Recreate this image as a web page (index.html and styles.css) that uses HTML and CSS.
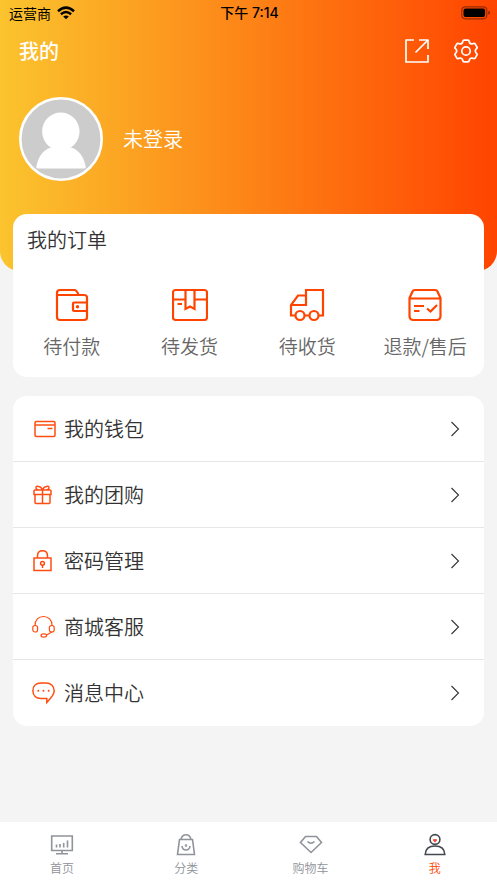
FILE: index.html
```html
<!DOCTYPE html>
<html lang="zh-CN">
<head>
<meta charset="utf-8">
<meta name="viewport" content="width=device-width, initial-scale=1">
<title>我的</title>
<link rel="stylesheet" href="styles.css">
</head>
<body>
<header class="hero">
  <div class="status">
    <div class="carrier">运营商
      <svg width="18" height="14" viewBox="0 0 18 14" fill="none" stroke="#000" stroke-width="2.5"><path d="M1 5.2Q9-2 17 5.2M3.9 8.3Q9 3.8 14.1 8.3"/><path d="M9 13.2 6.2 10.4Q9 8.4 11.8 10.4Z" fill="#000" stroke="none"/></svg>
    </div>
    <div class="time">下午 7:14</div>
    <div class="battery">
      <svg width="29" height="14" viewBox="0 0 29 14"><rect x=".8" y=".8" width="25" height="12" rx="3.5" fill="none" stroke="#000" stroke-opacity=".4" stroke-width="1.2"/><rect x="2.5" y="2.5" width="21.600" height="8.600" rx="2"/><path d="M27.300 4.800Q29 5.500 29 6.800T27.300 8.800Z" fill-opacity=".5"/></svg>
    </div>
  </div>
  <div class="topbar">
    <h1>我的</h1>
    <button class="icon-button" type="button" aria-label="分享">
      <svg width="24" height="24" viewBox="0 0 24 24"><path d="M9 1H1v22h22v-7M14 1h9v9M23 1 10.500 13.500"/></svg>
    </button>
    <button class="icon-button" type="button" aria-label="设置">
      <svg width="24" height="24" viewBox="0 0 24 24"><circle cx="12" cy="12" r="4.200"/><path d="M10 1.200H14Q15 1.200 15.200 2.500 15.700 5 18 5 20.500 3.800 21.300 5.200L22.900 8Q23.500 9 22.300 9.900 20.300 12 22.300 14.100 23.500 15 22.900 16L21.300 18.800Q20.500 20.200 18 19 15.700 19 15.200 21.500 15 22.800 14 22.800H10Q9 22.800 8.800 21.500 8.300 19 6 19 3.500 20.200 2.700 18.800L1.100 16Q.5 15 1.700 14.100 3.700 12 1.700 9.900 .5 9 1.100 8L2.700 5.200Q3.500 3.800 6 5 8.300 5 8.800 2.500 9 1.200 10 1.200Z"/></svg>
    </button>
  </div>
  <div class="profile">
    <svg class="avatar" viewBox="0 0 84 84" aria-hidden="true"><circle cx="42" cy="42" r="40.700" fill="#ccc" stroke="#fff" stroke-width="2.600"/><ellipse cx="41.800" cy="34.500" rx="18.700" ry="19" fill="#fff"/><path d="M32 50.500Q20.500 54 17.300 69.500 17 71.500 19 71.500H65Q67 71.500 66.700 69.500 63.500 54 52 50.500Z" fill="#fff"/></svg>
    <a class="login" href="#login">未登录</a>
  </div>
</header>

<main class="content">
  <section class="card orders">
    <h2>我的订单</h2>
    <nav class="order-list" aria-label="我的订单">
      <a href="#pay"><svg width="36" height="36" viewBox="0 0 36 36"><path d="M3 8H30Q33 8 33 10.500V30.500Q33 33 30 33H6Q3 33 3 30V6Q3 3 6 3H20Q23 3 24.500 8M33 15.500H20Q19 15.500 19 16.500V23Q19 24 20 24H33"/><circle class="dot" cx="23.500" cy="19.800" r="1.700"/></svg><span>待付款</span></a>
      <a href="#ship"><svg width="36" height="36" viewBox="0 0 36 36"><rect x="1" y="3" width="34" height="30" rx="2.500"/><path d="M1 12.500H13M23 12.500H35M13.500 3V22L18 19.500 22.500 22V3M5.500 17H10"/></svg><span>待发货</span></a>
      <a href="#receive"><svg width="36" height="36" viewBox="0 0 36 36"><path d="M17 19V3H34V28.500H30M6 28.500H2V18L9 8.500H17M2 18H17M16 28.500H20"/><circle cx="11" cy="28.500" r="4.500"/><circle cx="25" cy="28.500" r="4.500"/></svg><span>待收货</span></a>
      <a href="#refund"><svg width="36" height="36" viewBox="0 0 36 36"><path d="M2.500 11 5.500 4.500Q6 3 8 3H28Q30 3 30.500 4.500L33.500 11V29Q33.500 33 29.500 33H6.500Q2.500 33 2.500 29ZM2.500 11.500H33.500M7 19H17M7 24H12.500M20 21.500 23.500 24.500 30 18"/></svg><span>退款/售后</span></a>
    </nav>
  </section>

  <nav class="card menu" aria-label="服务">
    <a href="#wallet"><svg class="lead" viewBox="0 0 24 24"><rect x="3" y="4.500" width="20" height="15" rx="1.200"/><path d="M3 8H23M15.500 11.500H20.500"/></svg><span>我的钱包</span><svg class="chevron" viewBox="0 0 10 16"><path d="M1.500 1 8.500 8 1.500 15"/></svg></a>
    <a href="#group"><svg class="lead" viewBox="0 0 24 24"><path d="M3 7H18Q19 7 19 8V11.500H2V8Q2 7 3 7ZM3 11.500V19.500Q3 20.500 4 20.500H17Q18 20.500 18 19.500V11.500M10.500 7V20.500M10.500 7Q4 7.500 4 5T6.500 3.500Q9 3.500 10.500 7M10.500 7Q17 7.500 17 5T14.500 3.500Q12 3.500 10.500 7"/></svg><span>我的团购</span><svg class="chevron" viewBox="0 0 10 16"><path d="M1.500 1 8.500 8 1.500 15"/></svg></a>
    <a href="#password"><svg class="lead" viewBox="0 0 24 24"><rect x="2" y="9" width="17" height="12.500"/><path d="M5.500 9V7Q5.500 1.800 10.500 1.800T15.500 7V9M10.500 16V19"/><circle cx="10.500" cy="14.300" r="1.900"/></svg><span>密码管理</span><svg class="chevron" viewBox="0 0 10 16"><path d="M1.500 1 8.500 8 1.500 15"/></svg></a>
    <a href="#service"><svg class="lead thin" viewBox="0 0 24 24"><path d="M3 10.500C3 5 6.500 1.500 11.500 1.500S20 5 20 10.500M20 17 14.500 20"/><rect x=".8" y="10.500" width="4.800" height="6.500" rx="2.200"/><rect x="17.400" y="10.500" width="4.800" height="6.500" rx="2.200"/><ellipse cx="11.800" cy="20.500" rx="2.800" ry="1.600"/></svg><span>商城客服</span><svg class="chevron" viewBox="0 0 10 16"><path d="M1.500 1 8.500 8 1.500 15"/></svg></a>
    <a href="#messages"><svg class="lead" viewBox="0 0 24 24"><path d="M9 2H14C19 2 22.200 5.300 22.200 9.800 22.200 13 20 15.500 18.500 17.300L14.800 21.500V17.500H9C4 17.500 .900 14.500 .900 9.800S4 2 9 2Z"/><path class="dots" d="M6.300 9.800H6.310M11.500 9.800H11.510M16.700 9.800H16.710"/></svg><span>消息中心</span><svg class="chevron" viewBox="0 0 10 16"><path d="M1.500 1 8.500 8 1.500 15"/></svg></a>
  </nav>
</main>

<nav class="tabbar" aria-label="主导航">
  <a href="#home"><svg viewBox="0 0 24 24"><path d="M1.700 4H22.300V18.500H1.700ZM12 18.500V21.500M6 21.800H18M6.500 12.500V15.500M10 12V15.500M13.700 11V15.500M17.500 8.500V15.500"/></svg><span>首页</span></a>
  <a href="#category"><svg viewBox="0 0 24 24"><path d="M5.500 7.500H18.500L20.500 22.500H3.500ZM7 7.500Q8 2.800 12 2.800T17 7.500M8 14Q8.500 18 12 18T16 14"/><circle cx="12" cy="13.500" r=".500"/></svg><span>分类</span></a>
  <a href="#cart"><svg viewBox="0 0 24 24"><path d="M6.500 4.500H17.500L22.500 10.500 12 20.500 1.500 10.500ZM8.500 9.500Q12 13 15.500 9.500"/></svg><span>购物车</span></a>
  <a class="active" href="#me" aria-current="page"><svg viewBox="0 0 24 24"><circle cx="12" cy="7.500" r="4.900"/><path d="M2.200 22.500Q2.500 14 12 14T21.800 22.500Z"/><path class="heart" d="M12 10.500 10 8.500Q9.900 6.600 12 7.200 14.100 6.600 14 8.500Z"/></svg><span>我</span></a>
</nav>
</body>
</html>
```
FILE: styles.css
```css
* {
  box-sizing: border-box;
}

body {
  margin: 0;
  min-height: 100vh;
  display: flex;
  flex-direction: column;
  background: #f4f4f4;
  color: #333;
  font-family: "Noto Sans CJK SC", sans-serif;
  font-size: 20px;
  font-weight: 350;
  line-height: 28px;
}

a {
  color: inherit;
  text-decoration: none;
}

svg {
  display: block;
  flex: none;
}

h1,
h2 {
  margin: 0;
  font-size: 20px;
}

.hero {
  padding-bottom: 90px;
  border-radius: 0 0 20px 20px;
  background: linear-gradient(to right, #fbc42e, #ff4400);
  color: #fff;
}

.status {
  display: grid;
  grid-template-columns: 1fr auto 1fr;
  height: 25px;
  padding: 0 7px 0 9px;
  align-items: center;
  color: #000;
  font-size: 14px;
  font-weight: 400;
  line-height: 24px;
}

.carrier {
  display: flex;
  align-items: center;
  gap: 6px;
}

.time {
  font-family: Inter, "Noto Sans CJK SC", sans-serif;
  font-weight: 500;
}

.battery {
  justify-self: end;
}

.topbar {
  display: flex;
  align-items: center;
  gap: 25px;
  height: 52px;
  padding: 0 19px;
}

.topbar h1 {
  margin-right: auto;
  font-weight: 500;
}

.icon-button {
  padding: 0;
  border: 0;
  background: none;
}

.icon-button svg {
  fill: none;
  stroke: #fff;
  stroke-width: 1.7;
  stroke-linejoin: round;
}

.profile {
  display: flex;
  align-items: center;
  gap: 20px;
  padding: 20px 19px 0;
}

.avatar {
  width: 84px;
  height: 84px;
}

.content {
  flex: 1;
  padding: 0 13px 20px;
}

.card {
  border-radius: 14px;
  background: #fff;
}

.orders {
  margin-top: -57px;
  padding: 12px 0 17px;
}

.orders h2 {
  padding: 0 14px;
  font-weight: 350;
}

.order-list {
  display: grid;
  grid-template-columns: repeat(4, 1fr);
  margin-top: 33px;
}

.order-list a {
  display: flex;
  flex-direction: column;
  align-items: center;
  gap: 9px;
  color: #666;
  font-size: 19px;
}

.order-list svg {
  fill: none;
  stroke: #ff4400;
  stroke-width: 2.2;
}

.order-list .dot {
  fill: #ff4400;
  stroke: none;
}

.menu {
  margin-top: 19px;
}

.menu a {
  display: flex;
  align-items: center;
  gap: 8px;
  height: 66px;
  padding: 0 24px 0 19px;
  border-bottom: 1px solid #e6e6e6;
}

.menu a:last-child {
  border-bottom: 0;
}

.menu span {
  flex: 1;
}

.lead {
  width: 24px;
  height: 24px;
  fill: none;
  stroke: #ff4d12;
  stroke-width: 1.5;
}

.lead.thin {
  stroke-width: 1.2;
}

.lead .dots {
  stroke-width: 2;
  stroke-linecap: round;
}

.chevron {
  width: 10px;
  height: 16px;
  fill: none;
  stroke: #333;
  stroke-width: 1.1;
}

.tabbar {
  display: grid;
  grid-template-columns: repeat(4, 1fr);
  height: 61px;
  padding-top: 10px;
  background: #fff;
  color: #909399;
  font-size: 12px;
  line-height: 20px;
}

.tabbar a {
  display: flex;
  flex-direction: column;
  align-items: center;
  gap: 2px;
}

.tabbar svg {
  width: 24px;
  height: 24px;
  fill: none;
  stroke: #909399;
  stroke-width: 1.6;
}

.tabbar .active {
  color: #ff4400;
}

.tabbar .active svg {
  stroke: #45494f;
}

.tabbar .heart {
  fill: #ff4433;
  stroke: none;
}
```
